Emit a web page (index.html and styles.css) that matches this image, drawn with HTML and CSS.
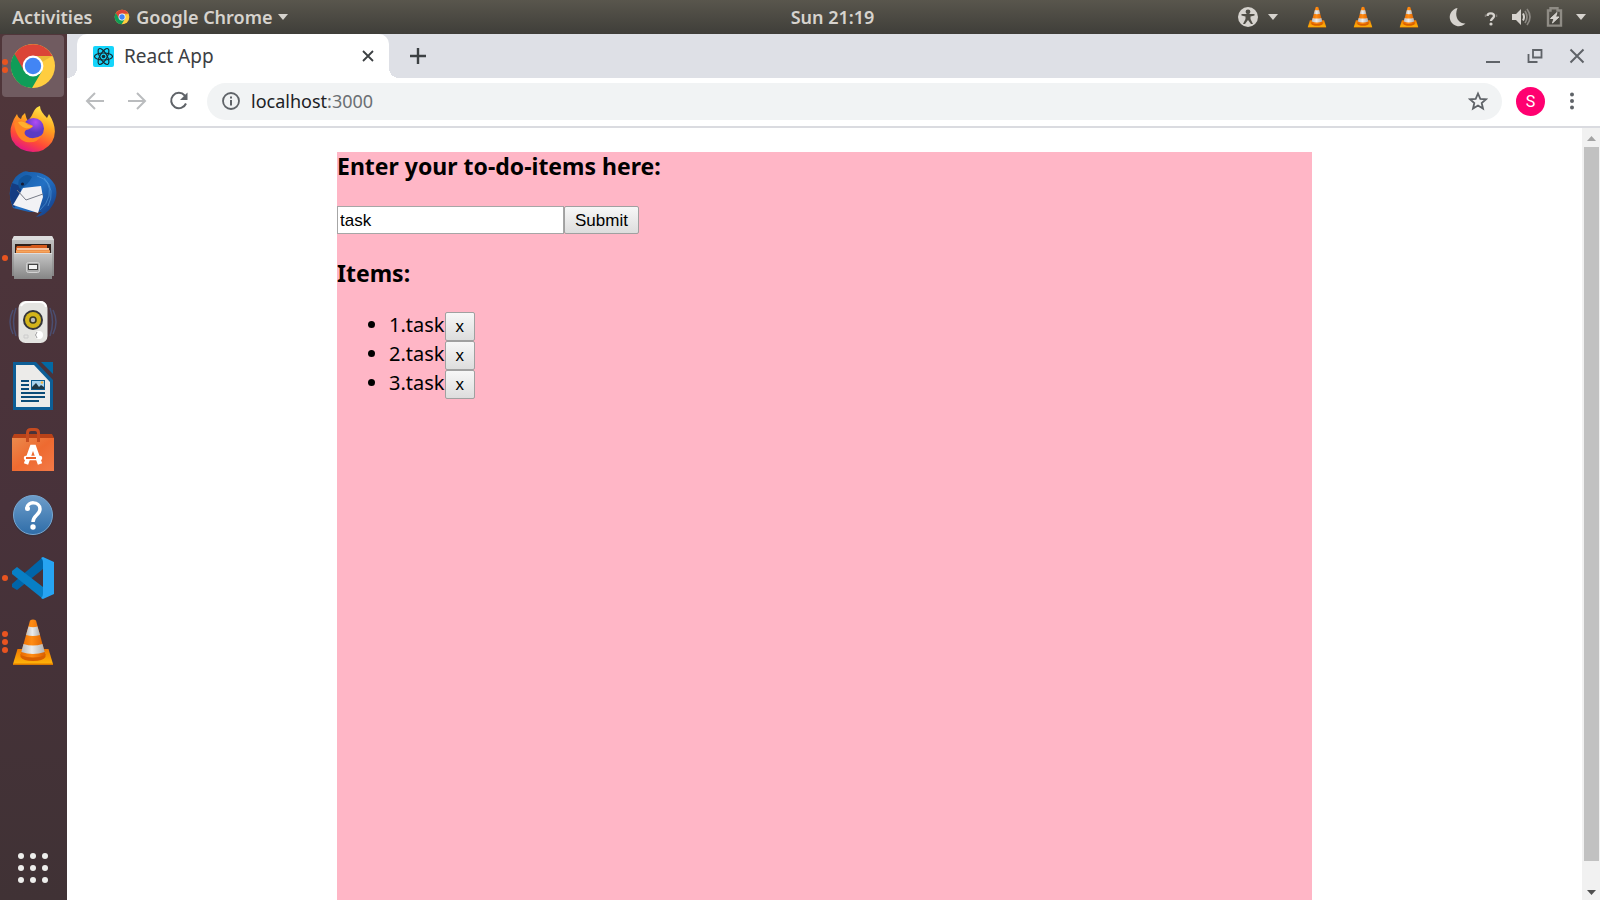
FILE: index.html
```html
<!DOCTYPE html>
<html lang="en">
<head>
<meta charset="utf-8">
<title>React App</title>
<link rel="stylesheet" href="styles.css">
</head>
<body>
<svg class="defs" aria-hidden="true">
  <defs>
    <linearGradient id="coneOrange" x1="0" x2="1" y1="0" y2="0"><stop offset="0" stop-color="#e86a00"/><stop offset=".45" stop-color="#ff8c14"/><stop offset="1" stop-color="#d95f00"/></linearGradient>
    <linearGradient id="coneWhite" x1="0" x2="1" y1="0" y2="0"><stop offset="0" stop-color="#b9b9b9"/><stop offset=".45" stop-color="#ececec"/><stop offset="1" stop-color="#b0b0b0"/></linearGradient>
    <linearGradient id="coneBase" x1="0" x2="0" y1="0" y2="1"><stop offset="0" stop-color="#f07800"/><stop offset="1" stop-color="#ffb60a"/></linearGradient>
    <symbol id="chrome" viewBox="0 0 48 48">
      <circle cx="24" cy="24" r="22" fill="#ffcd40"/>
      <path d="M5 13A22 22 0 0 1 43.400 14H24L14 29Z" fill="#db4437"/>
      <path d="M5.500 12A22 22 0 0 0 23 46L33 29L24 34L14.500 28Z" fill="#0f9d58"/>
      <path d="M24 14H43.400L33 20Z" fill="#c89b2c" opacity=".4"/>
      <circle cx="24" cy="24" r="10.400" fill="#fff"/>
      <circle cx="24" cy="24" r="8.200" fill="#4285f4"/>
    </symbol>
    <symbol id="cone" viewBox="0 0 48 48">
      <path d="M8.500 31H39.500L44 46H4Z" fill="url(#coneBase)"/>
      <path d="M4 45.500H44V47H4Z" fill="#dc7800"/>
      <path d="M11.500 36Q24 40 36.500 36V39Q34 43 24 43Q14 43 11.500 39Z" fill="#d85f00"/>
      <path d="M21 2.500Q24 .500 27 2.500L36.500 37Q24 42 11.500 37Z" fill="url(#coneOrange)"/>
      <path d="M19.500 8.500Q24 10 28.500 8.500L31 17Q24 19 17 17Z" fill="url(#coneWhite)"/>
      <path d="M14.500 26Q24 29 33.500 26L35.700 34Q24 38 12.300 34Z" fill="url(#coneWhite)"/>
    </symbol>
  </defs>
</svg>

<header class="topbar">
  <div class="topbar-left">
    <button class="bar-item" type="button">Activities</button>
    <button class="bar-item" type="button">
      <svg class="icon-16" aria-hidden="true"><use href="#chrome"/></svg>
      Google Chrome
      <svg class="caret" viewBox="0 0 10 6" aria-hidden="true"><path d="M0 0H10L5 6Z"/></svg>
    </button>
  </div>
  <button class="bar-item clock" type="button">Sun 21:19</button>
  <div class="topbar-right">
    <button class="bar-item access" type="button" aria-label="Accessibility">
      <svg class="icon-20" viewBox="0 0 20 20"><circle cx="10" cy="10" r="10" fill="#d6d3ce"/><circle cx="10" cy="4.800" r="2.400" fill="#504e46"/><path d="M3.500 7H16.500V8.500L12.500 9.500V12L15 17H13L10 13L7 17H5L7.500 12V9.500L3.500 8.500Z" fill="#504e46"/></svg>
      <svg class="caret" viewBox="0 0 10 6"><path d="M0 0H10L5 6Z"/></svg>
    </button>
    <div class="cones">
      <button class="bar-item" type="button" aria-label="VLC"><svg class="icon-22"><use href="#cone"/></svg></button>
      <button class="bar-item" type="button" aria-label="VLC"><svg class="icon-22"><use href="#cone"/></svg></button>
      <button class="bar-item" type="button" aria-label="VLC"><svg class="icon-22"><use href="#cone"/></svg></button>
    </div>
    <button class="bar-item system" type="button" aria-label="System menu">
      <svg class="icon-20" viewBox="0 0 20 20"><path d="M9.500 1A9.200 9.200 0 1 0 17.500 16.500C10 17 6 9 9.500 1Z" fill="#d6d3ce"/></svg>
      <svg class="icon-20" viewBox="0 0 20 20"><path d="M7.500 9C7.500 5.500 14 5.500 14 9C14 11.500 11 11.500 11 14" fill="none" stroke="#d6d3ce" stroke-width="2.300"/><circle cx="11" cy="17" r="1.600" fill="#d6d3ce"/><path d="M5.500 7.500V10M16.500 7.500V10" stroke="#7d7a74" stroke-width="1.500"/></svg>
      <svg class="icon-20" viewBox="0 0 20 20"><path d="M0 7H4L9 2V18L4 13H0Z" fill="#d6d3ce"/><path d="M11 6.500Q13 10 11 13.500" fill="none" stroke="#d6d3ce" stroke-width="2"/><path d="M13 4Q17 10 13 16M15 2Q21 10 15 18" fill="none" stroke="#8b8882" stroke-width="1.700"/></svg>
      <svg class="icon-20" viewBox="0 0 20 20"><path d="M6.500 3.500V1.200H13.500V3.500H17V18.600H4V3.500Z" fill="none" stroke="#8f8c85" stroke-width="2.400"/><path d="M13 5.500L6.500 11.500H10L8.500 16L15 10H11.500Z" fill="#d6d3ce" stroke="#d6d3ce"/></svg>
      <svg class="caret" viewBox="0 0 10 6"><path d="M0 0H10L5 6Z"/></svg>
    </button>
  </div>
</header>

<div class="desktop">
  <nav class="dock" aria-label="Dock">
    <button class="dock-item active" type="button" aria-label="Google Chrome">
      <span class="dots"><i></i><i></i></span>
      <svg class="icon-48"><use href="#chrome"/></svg>
    </button>
    <button class="dock-item" type="button" aria-label="Firefox">
      <svg class="icon-48" viewBox="0 0 48 48">
        <defs><linearGradient id="ff" x1=".8" y1="0" x2=".35" y2="1"><stop offset="0" stop-color="#fff44f"/><stop offset=".4" stop-color="#ffa21f"/><stop offset=".75" stop-color="#ff4a38"/><stop offset="1" stop-color="#e31587"/></linearGradient><radialGradient id="ffp" cx=".6" cy=".2"><stop offset="0" stop-color="#b14bf5"/><stop offset="1" stop-color="#5b3bc4"/></radialGradient></defs>
        <path d="M3 18Q5 12 8 8Q9 12 12 13Q13 9 16 7Q17 12 19 15Q23 10 25 5Q27 1 31 0Q31 5 38 12L40 8Q50 24 43 36Q36 46 24 46Q9 45 3 34Q0 25 3 18Z" fill="url(#ff)"/>
        <circle cx="24.500" cy="22.500" r="10.500" fill="url(#ffp)"/>
        <path d="M5 17Q12 12 18 17L24 20Q22 23 17 24Q14 27 17 30Q24 35 33 29Q28 38 17 36Q7 33 5 17Z" fill="#ff8424"/>
        <path d="M9 16Q15 14 19 19L24 20Q21 23 16 22Q11 20 9 16Z" fill="#ffb02e"/>
      </svg>
    </button>
    <button class="dock-item" type="button" aria-label="Thunderbird">
      <svg class="icon-48" viewBox="0 0 48 48">
        <defs><linearGradient id="tb" x1="0" y1="0" x2="1" y2="1"><stop offset="0" stop-color="#1557a0"/><stop offset=".5" stop-color="#2371c4"/><stop offset="1" stop-color="#11347c"/></linearGradient></defs>
        <path d="M12 3Q16 0 20 2Q38 1 46 15Q50 26 43 36Q37 46 27 47L33 42H20L4 38Q-2 24 3 13Q7 5 12 3Z" fill="url(#tb)"/>
        <path d="M3 13Q-2 27 5 38L12 28V16Z" fill="#143c82"/>
        <path d="M14 18L32 16L34 27L29 43L4 35Z" fill="#f2f2f5"/>
        <path d="M8 20L17 30L34 24" fill="none" stroke="#777b87" stroke-width="1"/>
        <path d="M11 19Q19 15 23 7Q17 2 10 10Q8 15 11 19Z" fill="#11549a"/>
        <circle cx="13.500" cy="14" r="1.600" fill="#161d37"/>
        <path d="M28 6Q43 10 40 26Q38 34 31 40M35 8Q47 20 39 36" fill="none" stroke="#62ace8" stroke-width="1" opacity=".5"/>
      </svg>
    </button>
    <button class="dock-item" type="button" aria-label="Files">
      <span class="dots"><i></i></span>
      <svg class="icon-48" viewBox="0 0 48 48">
        <defs><linearGradient id="cab" x1="0" y1="0" x2="0" y2="1"><stop offset="0" stop-color="#c6c6c6"/><stop offset="1" stop-color="#858585"/></linearGradient></defs>
        <path d="M5 2H43L45 6V42H3V6Z" fill="url(#cab)"/><path d="M5 2H43L45 6H3Z" fill="#ddd"/>
        <path d="M6 10H42V20H6Z" fill="#30201b"/><path d="M8 12H21L23 11H38V14H40V20H7V14Z" fill="#d65a1c"/><path d="M8 15H40" stroke="#ffe6cc" stroke-width="1.500"/><path d="M7 17.500H41" stroke="#f5a55c" stroke-width="2.500"/>
        <path d="M5 19H43V45H5Z" fill="url(#cab)"/><path d="M5 19.500H43" stroke="#ddd"/>
        <rect x="17.500" y="28.500" width="13" height="10" rx="2" fill="#aaa" stroke="#d2d2d2"/><rect x="19.500" y="30.500" width="9" height="5" fill="#f4f4f4" stroke="#444"/>
      </svg>
    </button>
    <button class="dock-item" type="button" aria-label="Rhythmbox">
      <svg class="icon-48" viewBox="0 0 48 48">
        <path d="M4 12Q-2 24 4 36M7 10Q2 24 7 38M44 12Q50 24 44 36M41 10Q46 24 41 38" fill="none" stroke="#4b4e70" stroke-width="1.500"/>
        <rect x="9.500" y="3" width="29" height="42" rx="7" fill="#e4e4e1"/><path d="M12 8Q14 4 19 4H31Q36 4 37 9" stroke="#fff" stroke-width="2" fill="none"/>
        <circle cx="24" cy="22" r="10" fill="#34353a"/><circle cx="24" cy="22" r="8" fill="#d3b41a"/><circle cx="24" cy="22" r="3.800" fill="#3b3925"/><circle cx="24" cy="22" r="2.200" fill="#bbb"/>
        <circle cx="30" cy="37" r="4" fill="#fff"/><path d="M28 34Q25 37 28 40" fill="none" stroke="#999"/><path d="M15 37H19V40H15Z" fill="none" stroke="#ccc"/>
      </svg>
    </button>
    <button class="dock-item" type="button" aria-label="LibreOffice Writer">
      <svg class="icon-48" viewBox="0 0 48 48">
        <path d="M4 0H27L44 18V48H4Z" fill="#0d5e96"/><path d="M7 3H25L41 20V45H7Z" fill="#ecebe9"/><path d="M32 0H44V12Z" fill="#0369a3"/>
        <path d="M12 19H20M12 23H20M12 27H20M12 31H36M12 35H36M12 39H30" stroke="#0b4c78" stroke-width="2"/>
        <rect x="22.500" y="18.500" width="13" height="9" fill="#a8d4ef" stroke="#0b5b90"/><path d="M23 27V25L27 21L30 25L32 23L35 25V27Z" fill="#203844"/><circle cx="33" cy="20.500" r="1.300" fill="#f4b545"/>
      </svg>
    </button>
    <button class="dock-item" type="button" aria-label="Ubuntu Software">
      <svg class="icon-48" viewBox="0 0 48 48">
        <defs><linearGradient id="bag" x1="0" y1="0" x2="1" y2="1"><stop offset="0" stop-color="#eb8a4d"/><stop offset=".5" stop-color="#ee6a30"/><stop offset="1" stop-color="#f37a48"/></linearGradient></defs>
        <path d="M5 8H43L45 12H3Z" fill="#b94218"/><path d="M3 12H45V45H3Z" fill="url(#bag)"/>
        <path d="M18.500 16V7Q18.500 3.500 22 3.500H26Q29.500 3.500 29.500 7V16" fill="none" stroke="#c54b20" stroke-width="3"/>
        <path d="M17 38L23 21H25L31 38" fill="none" stroke="#fff" stroke-width="4.500"/><path d="M17 32H31" stroke="#fff" stroke-width="4.500" stroke-linecap="round"/><path d="M17 32H27" stroke="#ed622a" stroke-width="2"/>
      </svg>
    </button>
    <button class="dock-item" type="button" aria-label="Help">
      <svg class="icon-48" viewBox="0 0 48 48">
        <defs><linearGradient id="help" x1="0" y1="0" x2="0" y2="1"><stop offset="0" stop-color="#6d9dca"/><stop offset="1" stop-color="#2f6da8"/></linearGradient></defs>
        <circle cx="24" cy="26" r="20.500" fill="#33303b" opacity=".5"/><circle cx="24" cy="25" r="19.500" fill="url(#help)" stroke="#79a8d2"/>
        <path d="M18 18C18 11 31 11 31 19C31 25 24 25 24 32" fill="none" stroke="#fff" stroke-width="3.500"/><circle cx="18.500" cy="18.500" r="2.500" fill="#fff"/><circle cx="24" cy="37" r="2.700" fill="#fff"/>
      </svg>
    </button>
    <button class="dock-item" type="button" aria-label="Visual Studio Code">
      <span class="dots"><i></i></span>
      <svg class="icon-48" viewBox="0 0 48 48">
        <path d="M3 30L34 3V15L8 36L3 33Z" fill="#0065a9"/><path d="M3 17L8 13L34 33V45L3 20Z" fill="#087fc5"/><path d="M34 3L45 8V40L34 45L32 44Q34 43 34 39V9Q34 5 32 4Z" fill="#27a4f2"/>
      </svg>
    </button>
    <button class="dock-item" type="button" aria-label="VLC media player">
      <span class="dots"><i></i><i></i><i></i></span>
      <svg class="icon-48"><use href="#cone"/></svg>
    </button>
    <button class="dock-item show-apps" type="button" aria-label="Show applications">
      <span class="app-grid"><i></i><i></i><i></i><i></i><i></i><i></i><i></i><i></i><i></i></span>
    </button>
  </nav>

  <section class="browser" aria-label="Browser window">
    <div class="tabstrip">
      <div class="tab">
        <svg class="favicon" viewBox="0 0 21 21" aria-hidden="true"><rect width="21" height="21" rx="2" fill="#15d5fb"/><g fill="none" stroke="#17272e" stroke-width="1.200"><ellipse cx="10.500" cy="10.500" rx="9" ry="3.500"/><ellipse cx="10.500" cy="10.500" rx="9" ry="3.500" transform="rotate(60 10.500 10.500)"/><ellipse cx="10.500" cy="10.500" rx="9" ry="3.500" transform="rotate(120 10.500 10.500)"/></g><circle cx="10.500" cy="10.500" r="1.800" fill="#17272e"/></svg>
        <span class="tab-title">React App</span>
        <button class="plain" type="button" aria-label="Close tab"><svg class="icon-12" viewBox="0 0 12 12"><path d="M1 1L11 11M11 1L1 11" stroke="#3c4043" stroke-width="1.800"/></svg></button>
      </div>
      <button class="plain new-tab" type="button" aria-label="New tab"><svg class="icon-16" viewBox="0 0 16 16"><path d="M8 0V16M0 8H16" stroke="#3c4043" stroke-width="2.400"/></svg></button>
      <div class="window-controls">
        <button class="plain" type="button" aria-label="Minimize"><svg class="icon-16" viewBox="0 0 16 16"><path d="M1 14H15" stroke="#5f6368" stroke-width="2"/></svg></button>
        <button class="plain" type="button" aria-label="Restore"><svg class="icon-16" viewBox="0 0 16 16"><path d="M6 2H14.500V9.500H6ZM1.500 6V14H10.500" fill="none" stroke="#5f6368" stroke-width="1.800"/></svg></button>
        <button class="plain" type="button" aria-label="Close"><svg class="icon-16" viewBox="0 0 16 16"><path d="M1.500 1.500L14.500 14.500M14.500 1.500L1.500 14.500" stroke="#5f6368" stroke-width="2"/></svg></button>
      </div>
    </div>

    <div class="toolbar">
      <button class="plain" type="button" aria-label="Back"><svg class="icon-20" viewBox="0 0 20 20"><path d="M19 10H3M10 2L2 10L10 18" fill="none" stroke="#babcbe" stroke-width="2"/></svg></button>
      <button class="plain" type="button" aria-label="Forward"><svg class="icon-20" viewBox="0 0 20 20"><path d="M1 10H17M10 2L18 10L10 18" fill="none" stroke="#babcbe" stroke-width="2"/></svg></button>
      <button class="plain" type="button" aria-label="Reload"><svg class="icon-20" viewBox="0 0 20 20"><path d="M17 12.500A7.700 7.700 0 1 1 15.700 4.500L17 6" fill="none" stroke="#5f6368" stroke-width="2"/><path d="M18.500 1.500V9H11Z" fill="#5f6368"/></svg></button>
      <div class="omnibox">
        <svg class="icon-18" viewBox="0 0 18 18" aria-hidden="true"><circle cx="9" cy="9" r="8" fill="none" stroke="#5f6368" stroke-width="1.800"/><path d="M9 8V13.500M9 4.500V6.500" stroke="#5f6368" stroke-width="2"/></svg>
        <a class="address" href="#todo">localhost<span class="port">:3000</span></a>
        <button class="plain" type="button" aria-label="Bookmark"><svg class="icon-20" viewBox="0 0 20 20"><path d="M10 2.500L12.300 7.800L18 8.300L13.700 12L15 17.600L10 14.600L5 17.600L6.300 12L2 8.300L7.700 7.800Z" fill="none" stroke="#5f6368" stroke-width="1.800"/></svg></button>
      </div>
      <button class="avatar" type="button">S</button>
      <button class="plain menu" type="button" aria-label="Menu"><svg class="icon-18" viewBox="0 0 18 18"><circle cx="9" cy="2.500" r="2" fill="#5f6368"/><circle cx="9" cy="9" r="2" fill="#5f6368"/><circle cx="9" cy="15.500" r="2" fill="#5f6368"/></svg></button>
    </div>

    <div class="viewport">
      <main class="page">
        <div class="todo" id="todo">
          <h3><label for="task">Enter your to-do-items here:</label></h3>
          <form class="entry">
            <input class="task-input" id="task" type="text" value="task">
            <button class="button" type="button">Submit</button>
          </form>
          <h3>Items:</h3>
          <ul class="items">
            <li><span class="row">1.task<button class="button remove" type="button">x</button></span></li>
            <li><span class="row">2.task<button class="button remove" type="button">x</button></span></li>
            <li><span class="row">3.task<button class="button remove" type="button">x</button></span></li>
          </ul>
        </div>
      </main>
      <div class="scrollbar" aria-hidden="true">
        <svg class="arrow up" viewBox="0 0 9 5"><path d="M0 5L4.500 0L9 5Z"/></svg>
        <span class="thumb"></span>
        <svg class="arrow down" viewBox="0 0 9 5"><path d="M0 0H9L4.500 5Z"/></svg>
      </div>
    </div>
  </section>
</div>
</body>
</html>
```

FILE: styles.css
```css
* { box-sizing: border-box; }

body {
  margin: 0;
  height: 100vh;
  display: flex;
  flex-direction: column;
  overflow: hidden;
  font-family: "Noto Sans", "Open Sans", sans-serif;
}

button { font-family: inherit; margin: 0; }
svg { display: block; flex: none; }

.defs { position: absolute; width: 0; height: 0; }

.icon-12 { width: 12px; height: 12px; }
.icon-16 { width: 16px; height: 16px; }
.icon-18 { width: 18px; height: 18px; }
.icon-20 { width: 20px; height: 20px; }
.icon-22 { width: 22px; height: 22px; }
.icon-48 { width: 48px; height: 48px; }

/* Desktop top bar */
.topbar {
  flex: none;
  height: 34px;
  display: grid;
  grid-template-columns: 1fr auto 1fr;
  align-items: center;
  padding: 0 14px 0 12px;
  background: linear-gradient(#59564d, #3f3e39);
}
.topbar-left { display: flex; gap: 22px; }
.topbar-right { display: flex; justify-content: flex-end; align-items: center; }
.bar-item {
  display: flex;
  align-items: center;
  gap: 6px;
  padding: 0;
  border: 0;
  background: none;
  color: #d6d3ce;
  font-size: 18px;
  font-weight: 600;
  line-height: 24px;
  white-space: nowrap;
}
.caret { width: 10px; height: 6px; fill: #d6d3ce; }
/* The clock is centred over the area to the right of the dock. */
.clock { margin-left: 67px; }
.access { gap: 10px; }
.cones { display: flex; gap: 24px; margin: 0 28px; }
.system { gap: 12px; }

/* Dock */
.desktop { flex: 1; min-height: 0; display: flex; }
.dock {
  flex: none;
  width: 67px;
  display: flex;
  flex-direction: column;
  gap: 2px;
  padding: 1px 3px 1px 2px;
  background: linear-gradient(#50363a, #48323a 55%, #403235);
}
.dock-item {
  position: relative;
  flex: none;
  height: 62px;
  display: grid;
  place-items: center;
  padding: 0;
  border: 0;
  border-radius: 4px;
  background: none;
}
.dock-item.active { background: #705b60; }
.dots {
  position: absolute;
  left: 0;
  top: 0;
  height: 100%;
  display: flex;
  flex-direction: column;
  justify-content: center;
  gap: 2px;
}
.dots i { width: 6px; height: 6px; border-radius: 50%; background: #e95420; }
.show-apps { margin-top: auto; }
.app-grid { display: grid; grid-template-columns: repeat(3, 6px); gap: 6px; }
.app-grid i { height: 6px; border-radius: 50%; background: #eeeeec; }

/* Browser chrome */
.browser { flex: 1; min-width: 0; display: flex; flex-direction: column; background: #fff; }
.plain { padding: 0; border: 0; background: none; }
.tabstrip {
  flex: none;
  height: 44px;
  display: flex;
  align-items: center;
  padding: 0 15px 0 10px;
  background: #dee0e6;
}
.tab {
  position: relative;
  width: 312px;
  height: 100%;
  display: flex;
  align-items: center;
  gap: 10px;
  padding: 0 15px 0 16px;
  border-radius: 10px 10px 0 0;
  background: #fff;
}
.tab::before,
.tab::after {
  content: "";
  position: absolute;
  bottom: 0;
  width: 10px;
  height: 10px;
}
.tab::before { right: 100%; background: radial-gradient(circle at 0 0, #dee0e6 10px, #fff 10px); }
.tab::after { left: 100%; background: radial-gradient(circle at 100% 0, #dee0e6 10px, #fff 10px); }
.favicon { width: 21px; height: 21px; }
.tab-title { flex: 1; color: #3c4043; font-size: 19px; line-height: 24px; }
.new-tab { margin-left: 21px; }
.window-controls { display: flex; gap: 26px; margin-left: auto; }

.toolbar {
  flex: none;
  height: 50px;
  display: flex;
  align-items: center;
  gap: 22px;
  padding: 0 19px 2px 18px;
  border-bottom: 2px solid #dadbe0;
}
.omnibox {
  flex: 1;
  height: 37px;
  display: flex;
  align-items: center;
  gap: 11px;
  margin: 0 -8px 0 -4px;
  padding: 0 14px 0 15px;
  border-radius: 19px;
  background: #f1f3f4;
}
.address { flex: 1; color: #202124; font-size: 18px; line-height: 24px; text-decoration: none; }
.port { color: #6b6f73; }
.avatar {
  width: 29px;
  height: 29px;
  padding: 0;
  border: 0;
  border-radius: 50%;
  background: #ff0070;
  color: #fff;
  font-family: Roboto, sans-serif;
  font-size: 16px;
}
.menu { margin-left: -4px; }

/* Page */
.viewport { flex: 1; min-height: 0; display: flex; }
.page { flex: 1; padding-top: 24px; overflow: hidden; }
.todo {
  max-width: 975px;
  height: 100%;
  margin: 0 auto;
  background: #ffb6c6;
  color: #000;
}
.todo h3 { margin: 0; font-size: 23px; line-height: 28px; }
.entry { display: flex; margin: 26px 0 25px; }
.task-input {
  width: 227px;
  height: 28px;
  padding: 1px 2px 0;
  border: 1px solid #a6a6a6;
  background: #fff;
  font-family: "Liberation Sans", sans-serif;
  font-size: 17px;
}
.button {
  height: 28px;
  padding: 1px 10px 0;
  border: 1px solid #a0a0a0;
  border-radius: 2px;
  background: linear-gradient(#f7f7f7, #dddddd);
  color: #000;
  font-family: "Liberation Sans", sans-serif;
  font-size: 17px;
}
.items { margin: 25px 0 0; padding-left: 52px; font-size: 20px; line-height: 26px; }
.row { display: inline-flex; align-items: flex-start; height: 29px; vertical-align: top; }
.remove { width: 30px; height: 29px; }

.scrollbar {
  flex: none;
  width: 18px;
  display: flex;
  flex-direction: column;
  align-items: center;
  gap: 6px;
  padding: 8px 1px 5px 2px;
  background: #f1f1f1;
}
.arrow { width: 9px; height: 5px; }
.up { fill: #a3a3a3; }
.down { fill: #505050; }
.thumb { width: 100%; flex: 1; margin-bottom: 23px; background: #c1c1c1; }
```
